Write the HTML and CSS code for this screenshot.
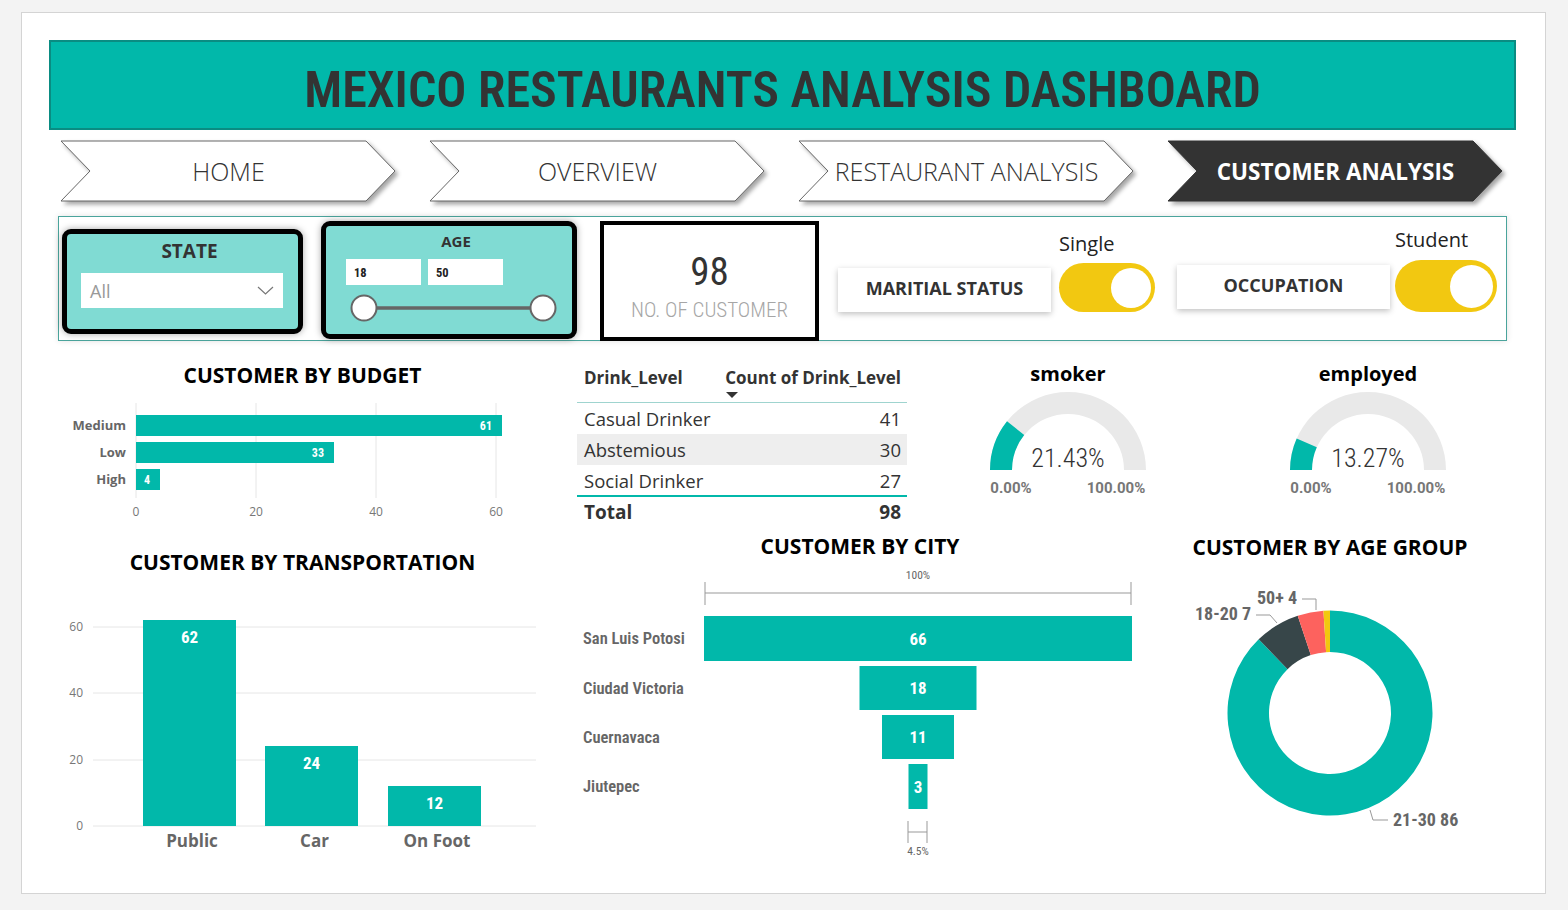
FILE: index.html
```html
<!DOCTYPE html>
<html lang="en">
<head>
<meta charset="utf-8">
<title>Mexico Restaurants Analysis Dashboard</title>
<link rel="stylesheet" href="styles.css">
</head>
<body>
<div class="canvas">
  <header class="banner"><h1>MEXICO RESTAURANTS ANALYSIS DASHBOARD</h1></header>

  <nav class="nav">
    <a class="tab">
      <svg class="tab-shape" viewBox="0 0 337 62" width="337" height="62"><polygon points="1,1 306,1 335,31 306,61 1,61 30,31"/></svg>
      <span class="tab-label">HOME</span>
    </a>
    <a class="tab">
      <svg class="tab-shape" viewBox="0 0 337 62" width="337" height="62"><polygon points="1,1 306,1 335,31 306,61 1,61 30,31"/></svg>
      <span class="tab-label">OVERVIEW</span>
    </a>
    <a class="tab">
      <svg class="tab-shape" viewBox="0 0 337 62" width="337" height="62"><polygon points="1,1 306,1 335,31 306,61 1,61 30,31"/></svg>
      <span class="tab-label">RESTAURANT ANALYSIS</span>
    </a>
    <a class="tab active">
      <svg class="tab-shape" viewBox="0 0 337 62" width="337" height="62"><polygon points="1,1 306,1 335,31 306,61 1,61 30,31"/></svg>
      <span class="tab-label">CUSTOMER ANALYSIS</span>
    </a>
  </nav>

  <section class="filters">
    <div class="slicer state">
      <div class="slicer-title">STATE</div>
      <div class="dropdown"><span>All</span><svg width="17" height="9" viewBox="0 0 17 9"><polyline points="1,1 8.5,8 16,1"/></svg></div>
    </div>
    <div class="slicer age">
      <div class="slicer-title">AGE</div>
      <div class="range-inputs"><span class="range-box">18</span><span class="range-box">50</span></div>
      <svg class="range-track" width="230" height="30" viewBox="0 0 230 30">
        <line x1="28" y1="15" x2="207" y2="15"/>
        <circle cx="28" cy="15" r="12.5"/>
        <circle cx="207" cy="15" r="12.5"/>
      </svg>
    </div>
    <div class="kpi">
      <div class="kpi-value">98</div>
      <div class="kpi-label">NO. OF CUSTOMER</div>
    </div>
    <div class="label-box marital">MARITIAL STATUS</div>
    <div class="toggle-col single">
      <div class="toggle-label">Single</div>
      <div class="toggle"><span class="knob"></span></div>
    </div>
    <div class="label-box occupation">OCCUPATION</div>
    <div class="toggle-col student">
      <div class="toggle-label">Student</div>
      <div class="toggle"><span class="knob"></span></div>
    </div>
  </section>

  <div class="row-a">
    <div class="budget">
      <h3 class="chart-title">CUSTOMER BY BUDGET</h3>
      <svg class="chart" width="507" height="140" viewBox="0 0 507 140">
        <g class="grid">
          <line x1="87" y1="16" x2="87" y2="111"/>
          <line x1="207" y1="16" x2="207" y2="111"/>
          <line x1="327" y1="16" x2="327" y2="111"/>
          <line x1="447" y1="16" x2="447" y2="111"/>
        </g>
        <g class="bar">
          <rect x="87" y="28" width="366" height="21"/>
          <rect x="87" y="55" width="198" height="21"/>
          <rect x="87" y="82" width="24" height="21"/>
        </g>
        <g class="val-s">
          <text x="443" y="42.5">61</text>
          <text x="275" y="69.5">33</text>
          <text x="101" y="96.5">4</text>
        </g>
        <g class="cat-s">
          <text x="77" y="43">Medium</text>
          <text x="77" y="70">Low</text>
          <text x="77" y="97">High</text>
        </g>
        <g class="axis">
          <text x="87" y="129">0</text>
          <text x="207" y="129">20</text>
          <text x="327" y="129">40</text>
          <text x="447" y="129">60</text>
        </g>
      </svg>
    </div>

    <div class="drink-table">
      <div class="t-head">
        <span class="th">Drink_Level</span>
        <span class="th th-num">Count of Drink_Level<i class="sort"></i></span>
      </div>
      <div class="t-row"><span>Casual Drinker</span><span>41</span></div>
      <div class="t-row alt"><span>Abstemious</span><span>30</span></div>
      <div class="t-row last"><span>Social Drinker</span><span>27</span></div>
      <div class="t-total"><span>Total</span><span>98</span></div>
    </div>

    <div class="gauge g1">
      <h3 class="chart-title lower">smoker</h3>
      <svg class="chart" width="200" height="130" viewBox="0 0 200 130">
        <path class="g-bg" d="M22 84 A78 78 0 0 1 178 84 L156 84 A56 56 0 0 0 44 84 Z"/>
        <path class="g-fill" d="M22 84 A78 78 0 0 1 39.02 35.37 L56.22 49.08 A56 56 0 0 0 44 84 Z"/>
        <text class="g-val" x="100" y="80.5">21.43%</text>
        <text class="g-min" x="43" y="107">0.00%</text>
        <text class="g-min" x="148" y="107">100.00%</text>
      </svg>
    </div>

    <div class="gauge g2">
      <h3 class="chart-title lower">employed</h3>
      <svg class="chart" width="200" height="130" viewBox="0 0 200 130">
        <path class="g-bg" d="M22 84 A78 78 0 0 1 178 84 L156 84 A56 56 0 0 0 44 84 Z"/>
        <path class="g-fill" d="M22 84 A78 78 0 0 1 28.68 52.41 L48.8 61.32 A56 56 0 0 0 44 84 Z"/>
        <text class="g-val" x="100" y="80.5">13.27%</text>
        <text class="g-min" x="43" y="107">0.00%</text>
        <text class="g-min" x="148" y="107">100.00%</text>
      </svg>
    </div>
  </div>

  <div class="row-b">
    <div class="transport">
      <h3 class="chart-title">CUSTOMER BY TRANSPORTATION</h3>
      <svg class="chart" width="507" height="265" viewBox="0 0 507 265">
        <g class="grid">
          <line x1="44" y1="37" x2="487" y2="37"/>
          <line x1="44" y1="103" x2="487" y2="103"/>
          <line x1="44" y1="170" x2="487" y2="170"/>
          <line x1="44" y1="236" x2="487" y2="236"/>
        </g>
        <g class="axis-end">
          <text x="34" y="41">60</text>
          <text x="34" y="107">40</text>
          <text x="34" y="174">20</text>
          <text x="34" y="240">0</text>
        </g>
        <g class="bar">
          <rect x="94" y="30" width="93" height="206"/>
          <rect x="216" y="156" width="93" height="80"/>
          <rect x="339" y="196" width="93" height="40"/>
        </g>
        <g class="val-l">
          <text x="140.5" y="53">62</text>
          <text x="262.5" y="179">24</text>
          <text x="385.5" y="219">12</text>
        </g>
        <g class="cat-l">
          <text x="143" y="257">Public</text>
          <text x="265.5" y="257">Car</text>
          <text x="388" y="257">On Foot</text>
        </g>
      </svg>
    </div>

    <div class="city">
      <h3 class="chart-title">CUSTOMER BY CITY</h3>
      <svg class="chart" width="580" height="300" viewBox="0 0 580 300">
        <text class="pct" x="348" y="14">100%</text>
        <path class="bracket" d="M135 17 V40 M135 28 H561 M561 17 V40"/>
        <g class="bar">
          <rect x="134" y="51" width="428" height="45"/>
          <rect x="289.5" y="101" width="117" height="44"/>
          <rect x="312" y="150" width="72" height="44"/>
          <rect x="338.5" y="199" width="19" height="45"/>
        </g>
        <g class="val-l">
          <text x="348" y="79.5">66</text>
          <text x="348" y="129">18</text>
          <text x="348" y="178">11</text>
          <text x="348" y="227.5">3</text>
        </g>
        <g class="cat-city">
          <text x="13" y="79">San Luis Potosi</text>
          <text x="13" y="128.5">Ciudad Victoria</text>
          <text x="13" y="177.5">Cuernavaca</text>
          <text x="13" y="227">Jiutepec</text>
        </g>
        <path class="bracket" d="M338 256 V278 M338 267 H357 M357 256 V278"/>
        <text class="pct" x="348" y="290">4.5%</text>
      </svg>
    </div>

    <div class="age-group">
      <h3 class="chart-title">CUSTOMER BY AGE GROUP</h3>
      <svg class="chart" width="300" height="300" viewBox="0 0 300 300">
        <path fill="#01b8aa" d="M150 45.5 A102.5 102.5 0 1 1 78.69 74.37 L107.56 104.18 A61 61 0 1 0 150 87 Z"/>
        <path fill="#374649" d="M78.69 74.37 A102.5 102.5 0 0 1 117.7 50.72 L130.78 90.11 A61 61 0 0 0 107.56 104.18 Z"/>
        <path fill="#fd625e" d="M117.7 50.72 A102.5 102.5 0 0 1 143.43 45.71 L146.09 87.13 A61 61 0 0 0 130.78 90.11 Z"/>
        <path fill="#f2c80f" d="M143.43 45.71 A102.5 102.5 0 0 1 150 45.5 L150 87 A61 61 0 0 0 146.09 87.13 Z"/>
        <g class="leader">
          <polyline points="122,34 136,34 136,45"/>
          <polyline points="76,50 90,50 97,58"/>
          <polyline points="190,245 193,255 208,255"/>
        </g>
        <g class="donut-lbl">
          <text x="77" y="39">50+ 4</text>
          <text x="15" y="55">18-20 7</text>
          <text x="213" y="261">21-30 86</text>
        </g>
      </svg>
    </div>
  </div>
</div>
</body>
</html>
```

FILE: styles.css
```css
:root {
  --din: "Roboto", "DejaVu Sans Condensed", sans-serif;
  --seg: "Open Sans", "Noto Sans", sans-serif;
  --teal: #01b8aa;
}

* { box-sizing: border-box; }

html, body { margin: 0; padding: 0; }

body {
  width: 1568px;
  height: 910px;
  overflow: hidden;
  background: #f3f3f3;
  font-family: var(--seg);
  color: #333;
}

.canvas {
  margin: 12px 0 0 21px;
  width: 1525px;
  height: 882px;
  background: #fff;
  border: 1px solid #d4d4d4;
  overflow: hidden;
}

/* Banner */
.banner {
  margin: 27px 0 0 27px;
  width: 1467px;
  height: 90px;
  background: var(--teal);
  border: 2px solid #0a8c82;
  display: flex;
  align-items: center;
  justify-content: center;
  padding-top: 10px;
}
.banner h1 {
  margin: 0;
  font-family: var(--din);
  font-stretch: 75%;
  font-weight: 600;
  font-size: 50px;
  line-height: 1;
  color: #333;
}

/* Navigation chevrons */
.nav {
  display: flex;
  gap: 32px;
  margin: 10px 0 0 38px;
}
.tab {
  display: grid;
  width: 337px;
  height: 62px;
  text-decoration: none;
}
.tab-shape {
  grid-area: 1 / 1;
  overflow: visible;
  filter: drop-shadow(3px 3px 2px rgba(0, 0, 0, 0.35));
}
.tab-shape polygon { fill: #fff; stroke: #666; stroke-width: 1; }
.tab.active .tab-shape polygon { fill: #333; stroke: #333; }
.tab-label {
  grid-area: 1 / 1;
  place-self: center;
  position: relative;
  font-size: 25px;
  font-weight: 350;
  color: #333;
}
.tab.active .tab-label { color: #fff; font-weight: 700; font-size: 22.5px; }

/* Filter panel */
.filters {
  display: flex;
  align-items: flex-start;
  margin: 14px 0 0 36px;
  width: 1449px;
  height: 125px;
  border: 1px solid #4aa49c;
  box-shadow: 0 0 6px rgba(0, 0, 0, 0.12);
}
.slicer {
  border: 5px solid #000;
  border-radius: 9px;
  background: #80dbd3;
  box-shadow: 0 0 7px rgba(0, 0, 0, 0.35);
}
.state {
  margin: 12px 0 0 3px;
  width: 241px;
  height: 105px;
  padding: 5px 15px 0 14px;
}
.slicer-title {
  font-weight: 700;
  font-size: 19px;
  line-height: 24px;
  text-align: center;
  padding-left: 15px;
  color: #333;
}
.dropdown {
  margin-top: 10px;
  height: 35px;
  background: #fff;
  display: flex;
  align-items: center;
  justify-content: space-between;
  padding: 0 9px;
  font-size: 18px;
  color: #999;
}
.dropdown polyline { fill: none; stroke: #777; stroke-width: 1.2; }
.age {
  margin: 4px 0 0 18px;
  width: 256px;
  height: 118px;
  padding-top: 6px;
}
.age .slicer-title { font-size: 15px; line-height: 18px; padding-left: 14px; }
.range-inputs {
  display: flex;
  gap: 7px;
  margin: 9px 0 0 20px;
}
.range-box {
  width: 75px;
  height: 26px;
  background: #fff;
  font-family: var(--din);
  font-stretch: 75%;
  font-weight: 700;
  font-size: 12.5px;
  padding-left: 8px;
  display: flex;
  align-items: center;
  color: #222;
}
.range-track { display: block; margin: 8px 0 0 10px; }
.range-track line { stroke: #666; stroke-width: 3.5; }
.range-track circle { fill: #fff; stroke: #666; stroke-width: 2; }

.kpi {
  margin: 4px 0 0 23px;
  width: 219px;
  height: 120px;
  border: 4px solid #000;
  background: #fff;
  display: flex;
  flex-direction: column;
  align-items: center;
  padding-top: 27px;
}
.kpi-value { font-family: var(--din); font-stretch: 75%; font-size: 39px; line-height: 40px; color: #333; }
.kpi-label {
  margin-top: 7px;
  font-family: var(--din);
  font-stretch: 75%;
  font-weight: 300;
  font-size: 21px;
  line-height: 22px;
  color: #a6a6a6;
}

.label-box {
  background: #fff;
  box-shadow: 0 2px 6px rgba(0, 0, 0, 0.25);
  width: 213px;
  height: 44px;
  display: flex;
  align-items: center;
  justify-content: center;
  padding-bottom: 5px;
  font-weight: 700;
  font-size: 18px;
  color: #333;
}
.marital { margin: 51px 0 0 19px; }
.occupation { margin: 48px 0 0 22px; }
.toggle-col { display: flex; flex-direction: column; }
.toggle-label { font-size: 20px; line-height: 27px; color: #222; }
.toggle {
  background: #f2c811;
  border-radius: 30px;
  display: flex;
  align-items: center;
  justify-content: flex-end;
  padding-right: 4px;
}
.knob { width: 40px; height: 40px; border-radius: 50%; background: #fff; }
.single { margin: 13px 0 0 8px; }
.single .toggle { margin-top: 6px; width: 96px; height: 49px; }
.student { margin: 9px 0 0 5px; }
.student .toggle { margin-top: 7px; width: 102px; height: 52px; }
.student .knob { width: 43px; height: 43px; }

/* Chart rows */
.row-a { display: flex; align-items: flex-start; margin-top: 9px; height: 180px; }
.row-b { display: flex; align-items: flex-start; height: 362px; }
.chart-title {
  margin: 0;
  font-weight: 700;
  font-size: 21px;
  line-height: 24px;
  color: #000;
  text-align: center;
}
.chart-title.lower { font-size: 20px; }
.chart { display: block; }

.budget { margin-left: 27px; width: 507px; }
.budget .chart-title { margin-top: 13px; }

.grid line { stroke: #e6e6e6; stroke-width: 1; }
.bar rect { fill: var(--teal); }
.val-s text { font-family: var(--din); font-stretch: 75%; font-weight: 700; font-size: 12px; fill: #fff; text-anchor: end; }
.val-l text { font-family: var(--din); font-stretch: 75%; font-weight: 700; font-size: 17px; fill: #fff; text-anchor: middle; }
.cat-s text { font-family: var(--seg); font-weight: 700; font-size: 13px; fill: #666; text-anchor: end; }
.cat-l text { font-family: var(--seg); font-weight: 700; font-size: 17px; fill: #666; text-anchor: middle; }
.axis text { font-family: var(--seg); font-size: 12px; fill: #777; text-anchor: middle; }
.axis-end text { font-family: var(--seg); font-size: 12px; fill: #777; text-anchor: end; }

/* Drink table */
.drink-table { margin-left: 21px; width: 330px; }
.t-head {
  display: flex;
  justify-content: space-between;
  align-items: flex-start;
  height: 53px;
  padding: 16px 6px 0 7px;
  border-bottom: 1px solid #9fd4cf;
}
.th { font-weight: 700; font-size: 17px; line-height: 24px; color: #333; }
.th-num { display: flex; flex-direction: column; align-items: flex-start; }
.sort {
  display: block;
  margin: 2px 0 0 1px;
  width: 0;
  height: 0;
  border-left: 6px solid transparent;
  border-right: 6px solid transparent;
  border-top: 6px solid #333;
}
.t-row {
  display: flex;
  justify-content: space-between;
  align-items: center;
  height: 31px;
  padding: 0 6px 0 7px;
  font-size: 18.5px;
  color: #333;
}
.t-row.alt { background: #eeeeee; }
.t-row.last { height: 32px; border-bottom: 2px solid var(--teal); }
.t-total {
  display: flex;
  justify-content: space-between;
  align-items: center;
  height: 30px;
  padding: 0 6px 0 7px;
  font-weight: 700;
  font-size: 19px;
  color: #333;
}

/* Gauges */
.gauge { width: 200px; }
.g1 { margin-left: 61px; }
.g2 { margin-left: 100px; }
.gauge .chart-title { margin-top: 12px; }
.g-bg { fill: #e9e9e9; }
.g-fill { fill: var(--teal); }
.g-val { font-family: var(--din); font-stretch: 75%; font-weight: 300; font-size: 26px; fill: #333; text-anchor: middle; }
.g-min { font-family: var(--din); font-stretch: 90%; font-weight: 700; font-size: 15px; fill: #777; text-anchor: middle; }

/* Row B */
.transport { margin-left: 27px; width: 507px; }
.transport .chart-title { margin-top: 20px; }
.transport .chart { margin-top: 16px; }

.city { margin-left: 14px; width: 580px; }
.city .chart-title { margin-top: 4px; }
.city .chart { margin-top: 7px; }
.pct { font-family: var(--din); font-stretch: 75%; font-size: 11.5px; fill: #666; text-anchor: middle; }
.bracket { fill: none; stroke: #999; stroke-width: 1; }
.cat-city text { font-family: var(--din); font-stretch: 75%; font-weight: 600; font-size: 16.5px; fill: #666; }

.age-group { margin-left: 30px; width: 300px; }
.age-group .chart-title { margin-top: 5px; }
.age-group .chart { margin-top: 6px; }
.leader polyline { fill: none; stroke: #999; stroke-width: 1; }
.donut-lbl text { font-family: var(--din); font-stretch: 75%; font-weight: 700; font-size: 18px; fill: #666; }
```
